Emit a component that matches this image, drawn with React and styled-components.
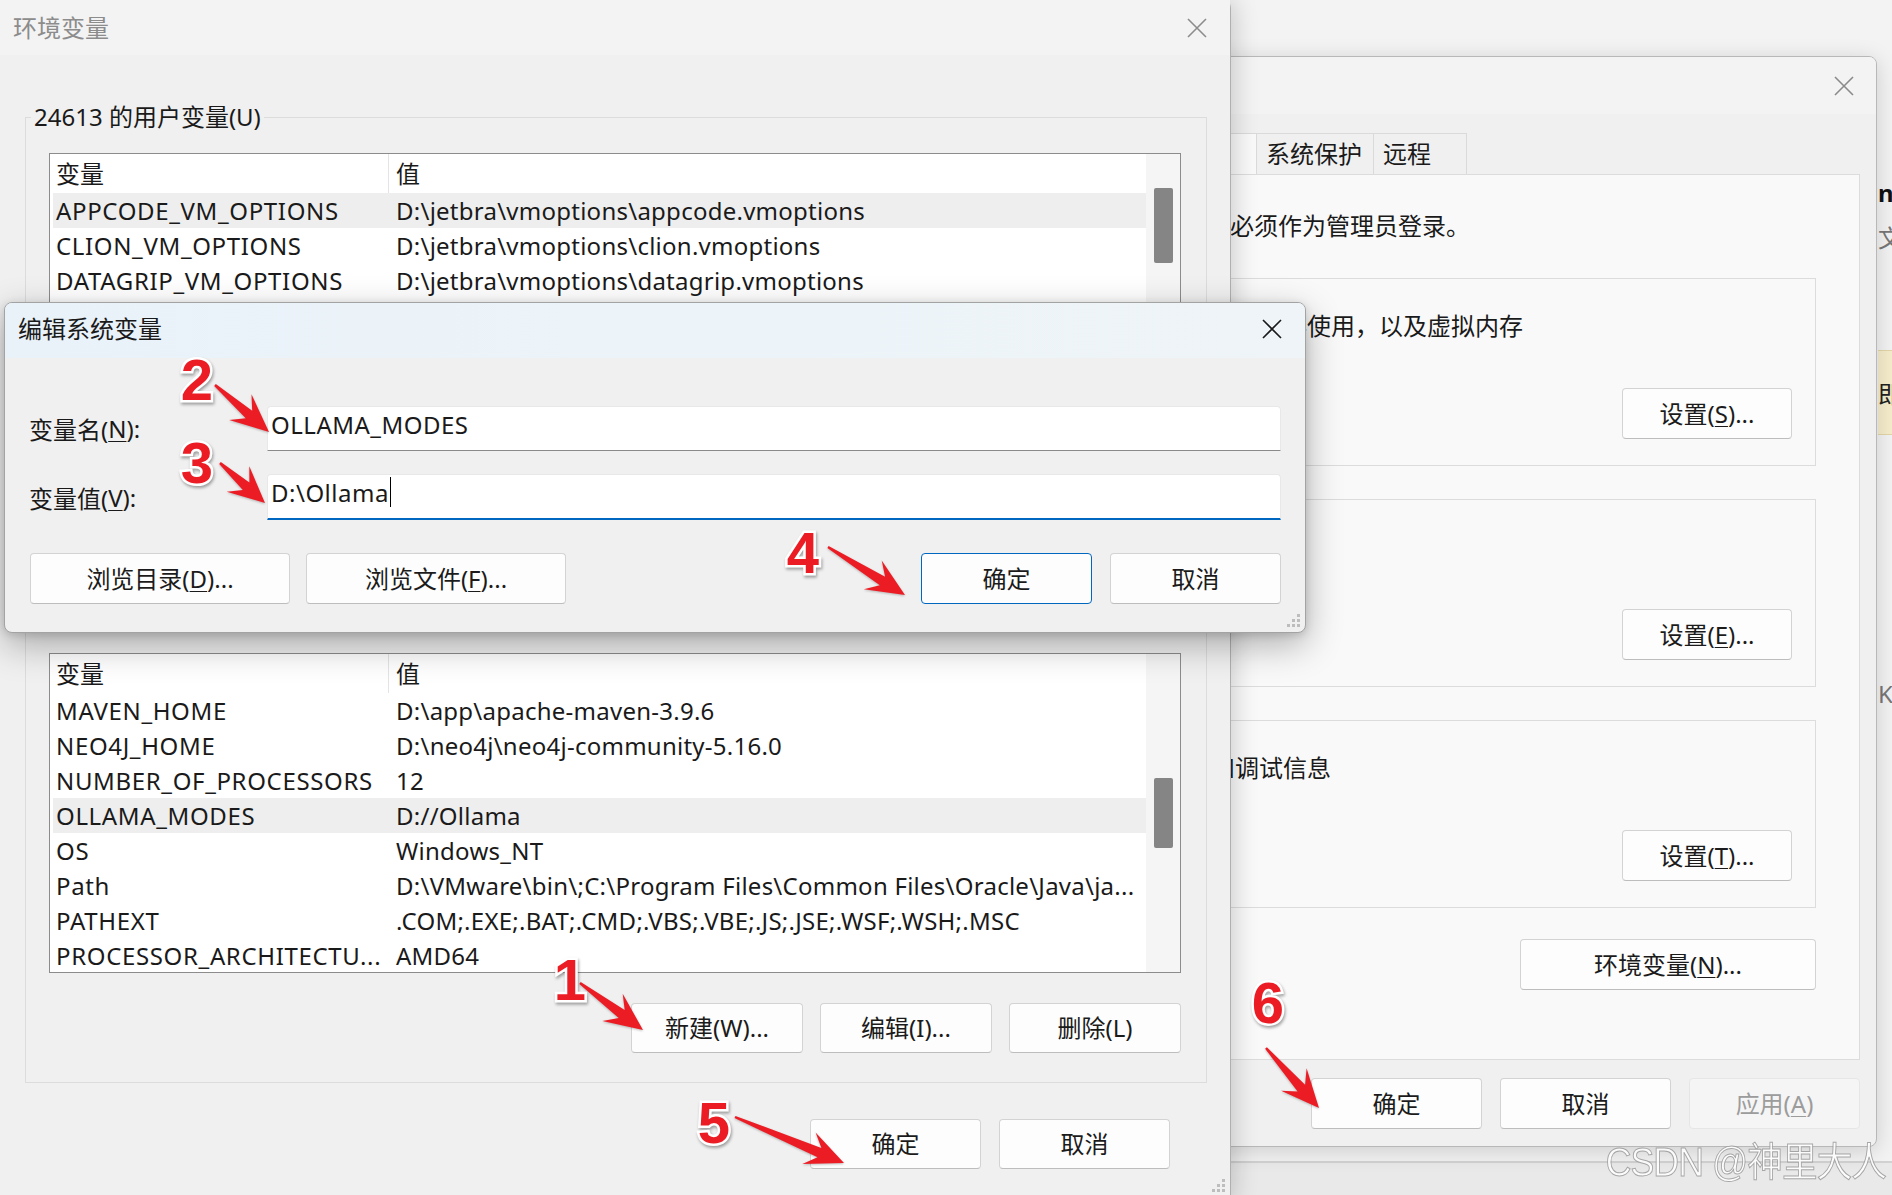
import React from 'react';
import styled, { createGlobalStyle } from 'styled-components';

const FONT = `"Noto Sans", "Noto Sans CJK SC", sans-serif`;

const Global = createGlobalStyle`
  html, body { margin: 0; padding: 0; overflow: hidden; background: #e9e9e9; }
  * { box-sizing: border-box; }
  #root { width: 1892px; height: 1195px; }
  u { text-decoration: underline; text-underline-offset: 3px; text-decoration-thickness: 1px; }
`;

const Desktop = styled.div`
  position: relative;
  width: 1892px;
  height: 1195px;
  overflow: hidden;
  background: #e9e9e9;
  font-family: ${FONT};
  font-size: 24px;
  color: #1a1a1a;
`;

/* ---------- window far behind ---------- */
const BehindWindow = styled.div`
  position: absolute;
  left: 1100px;
  top: 0;
  width: 792px;
  height: 1163px;
  background: #f3f3f3;
  border-bottom: 2px solid #d2d2d2;
  padding: 178px 0 0 778px;
  overflow: hidden;
  display: flex;
  flex-direction: column;
`;
const BehindTitle = styled.div`
  font-weight: 700;
  line-height: 30px;
  white-space: nowrap;
  color: #111;
`;
const BehindSub = styled.div`
  margin-top: 15px;
  line-height: 30px;
  color: #777;
  white-space: nowrap;
`;
const YellowBand = styled.div`
  margin-top: 97px;
  height: 85px;
  width: 40px;
  background: #f6edcc;
  border-top: 1px solid #e3d7a8;
  border-bottom: 1px solid #e3d7a8;
  display: flex;
  align-items: center;
  white-space: nowrap;
  color: #222;
`;
const BehindNote = styled.div`
  margin-top: 244px;
  line-height: 30px;
  color: #777;
  white-space: nowrap;
`;

/* ---------- shared ---------- */
const TitleBar = styled.div`
  flex-shrink: 0;
  height: ${(p) => p.$h}px;
  display: flex;
  align-items: center;
  justify-content: space-between;
  padding: 0 ${(p) => p.$pr}px ${(p) => p.$pb || 0}px ${(p) => p.$pl}px;
  background: ${(p) => p.$bg};
  color: ${(p) => p.$color};
  line-height: 30px;
`;

const CloseSvg = styled.svg`
  width: 20px;
  height: 20px;
  flex-shrink: 0;
`;
function CloseIcon({ color }) {
  return (
    <CloseSvg viewBox="0 0 20 20">
      <path d="M1 1 L19 19 M19 1 L1 19" stroke={color} strokeWidth="1.6" fill="none" />
    </CloseSvg>
  );
}

const Button = styled.button`
  width: ${(p) => p.$w}px;
  height: ${(p) => p.$h || 51}px;
  font-family: ${FONT};
  font-size: 24px;
  line-height: 30px;
  padding: 0;
  border-radius: 4px;
  background: ${(p) => (p.$disabled ? '#f5f5f5' : '#fdfdfd')};
  color: ${(p) => (p.$disabled ? '#9c9c9c' : '#1b1b1b')};
  border: 1px solid ${(p) => (p.$primary ? '#0067c0' : p.$disabled ? '#e6e6e6' : '#d3d3d3')};
  border-bottom-color: ${(p) => (p.$primary ? '#0067c0' : p.$disabled ? '#e6e6e6' : '#bdbdbd')};
  flex-shrink: 0;
`;

const Grip = styled.svg`
  position: absolute;
  right: ${(p) => p.$r}px;
  bottom: ${(p) => p.$b}px;
  width: 14px;
  height: 14px;
`;
function ResizeGrip({ r, b }) {
  const dots = [[10, 0], [10, 5], [5, 5], [10, 10], [5, 10], [0, 10]];
  return (
    <Grip $r={r} $b={b} viewBox="0 0 14 14">
      {dots.map(([x, y]) => (
        <rect key={`${x}-${y}`} x={x} y={y} width="3" height="3" fill="#bdbdbd" />
      ))}
    </Grip>
  );
}

/* ---------- System properties window ---------- */
const SysWindow = styled.div`
  position: absolute;
  left: 940px;
  top: 56px;
  width: 937px;
  height: 1091px;
  background: #f0f0f0;
  border: 1px solid #b8b8b8;
  border-radius: 8px;
  overflow: hidden;
  box-shadow: 0 4px 22px rgba(0, 0, 0, 0.16);
  display: flex;
  flex-direction: column;
`;
const SysBody = styled.div`
  padding: 19px 16px 0 16px;
  display: flex;
  flex-direction: column;
`;
const Tabs = styled.div`
  display: flex;
  height: 41px;
`;
const Tab = styled.div`
  width: ${(p) => p.$w}px;
  height: 41px;
  padding-left: 9px;
  line-height: 40px;
  border: 1px solid #dadada;
  border-bottom: none;
  border-left-width: ${(p) => (p.$first ? 1 : 0)}px;
  background: ${(p) => (p.$active ? '#f9f9f9' : '#f0f0f0')};
  white-space: nowrap;
`;
const Panel = styled.div`
  height: 886px;
  background: #f9f9f9;
  border: 1px solid #dcdcdc;
  padding: 36px 43px 0 18px;
  display: flex;
  flex-direction: column;
`;
const PanelText = styled.div`
  line-height: 30px;
  padding-left: 14px;
  white-space: nowrap;
`;
const SysGroup = styled.div`
  margin-top: ${(p) => p.$mt}px;
  height: 188px;
  border: 1px solid #dcdcdc;
  padding: 32px 23px 0 18px;
  display: flex;
  flex-direction: column;
`;
const GroupText = styled.div`
  line-height: 30px;
  white-space: nowrap;
`;
const GroupButton = styled(Button)`
  margin-top: auto;
  margin-bottom: 26px;
  align-self: flex-end;
`;
const EnvButton = styled(Button)`
  margin-top: 31px;
  align-self: flex-end;
`;
const Footer = styled.div`
  display: flex;
  justify-content: flex-end;
  gap: ${(p) => p.$gap}px;
  margin-top: ${(p) => p.$mt}px;
  padding-right: ${(p) => p.$pr || 0}px;
`;

/* ---------- Environment variables window ---------- */
const EnvWindow = styled.div`
  position: absolute;
  left: 0;
  top: 0;
  width: 1231px;
  height: 1203px;
  background: #f0f0f0;
  border-right: 1px solid #b0b0b0;
  border-radius: 0 8px 8px 0;
  box-shadow: 2px 0 26px rgba(0, 0, 0, 0.2);
  display: flex;
  flex-direction: column;
`;
const EnvBody = styled.div`
  padding: 62px 23px 0 25px;
  display: flex;
  flex-direction: column;
`;
const Group = styled.div`
  position: relative;
  margin-top: ${(p) => p.$mt || 0}px;
  border: 1px solid #dcdcdc;
  padding: 35px 25px 29px 23px;
`;
const Legend = styled.span`
  position: absolute;
  left: 5px;
  top: -16px;
  padding: 0 3px;
  background: #f0f0f0;
  line-height: 30px;
  white-space: nowrap;
`;
const VarList = styled.div`
  height: 320px;
  background: #ffffff;
  border: 1px solid #8c8c8c;
  display: flex;
`;
const ListBody = styled.div`
  flex: 1;
  min-width: 0;
  padding-left: 3px;
`;
const GridRow = styled.div`
  display: grid;
  grid-template-columns: 335px 1fr;
  height: ${(p) => p.$h}px;
  line-height: ${(p) => p.$h}px;
  background: ${(p) => (p.$selected ? '#eeeeee' : 'transparent')};
`;
const Cell = styled.div`
  padding-left: ${(p) => p.$pl}px;
  letter-spacing: ${(p) => p.$ls || 0}px;
  white-space: nowrap;
  overflow: hidden;
  ${(p) => (p.$divider ? 'border-left: 1px solid #e4e4e4;' : '')}
`;
const Scrollbar = styled.div`
  width: 34px;
  flex-shrink: 0;
  background: #f5f5f5;
  padding-left: 8px;
`;
const Thumb = styled.div`
  width: 19px;
  height: ${(p) => p.$h}px;
  margin-top: ${(p) => p.$top}px;
  background: #858585;
  border-radius: 2px;
`;
const ButtonRow = styled.div`
  display: flex;
  justify-content: flex-end;
  gap: 17px;
  margin-top: 30px;
`;

function VariableList({ rows, selected, thumbTop, thumbH }) {
  return (
    <VarList>
      <ListBody>
        <GridRow $h={39}>
          <Cell $pl={3}>变量</Cell>
          <Cell $pl={7} $divider>值</Cell>
        </GridRow>
        {rows.map(([n, v], i) => (
          <GridRow key={n} $h={35} $selected={i === selected}>
            <Cell $pl={3} $ls={0.65}>{n}</Cell>
            <Cell $pl={8} $ls={0.25}>{v}</Cell>
          </GridRow>
        ))}
      </ListBody>
      <Scrollbar>
        <Thumb $top={thumbTop} $h={thumbH} />
      </Scrollbar>
    </VarList>
  );
}

/* ---------- Edit dialog ---------- */
const EditDialog = styled.div`
  position: absolute;
  left: 4px;
  top: 302px;
  width: 1302px;
  height: 331px;
  background: #f0f0f0;
  border: 1px solid #a3a3a3;
  border-radius: 8px;
  overflow: hidden;
  box-shadow: 0 12px 36px rgba(0, 0, 0, 0.3), 0 2px 8px rgba(0, 0, 0, 0.14);
  display: flex;
  flex-direction: column;
`;
const DialogBody = styled.div`
  padding: 48px 24px 0 25px;
  display: flex;
  flex-direction: column;
`;
const FieldGrid = styled.div`
  display: grid;
  grid-template-columns: 237px 1fr;
  grid-template-rows: 45px 46px;
  row-gap: 23px;
`;
const Label = styled.div`
  display: flex;
  align-items: center;
  margin-left: -1px;
  white-space: nowrap;
`;
const TextBox = styled.div`
  background: #ffffff;
  border: 1px solid #e8e8e8;
  border-bottom: ${(p) => (p.$focused ? '2px solid #0067c0' : '1px solid #8a8a8a')};
  border-radius: 4px 4px 0 0;
  padding: 0 0 9px 3px;
  letter-spacing: 0.5px;
  display: flex;
  align-items: center;
  white-space: nowrap;
`;
const Caret = styled.span`
  display: inline-block;
  width: 1px;
  height: 30px;
  margin-left: 1px;
  background: #000;
`;
const DialogButtons = styled.div`
  margin-top: 33px;
  display: flex;
  justify-content: space-between;
`;
const BtnGroup = styled.div`
  display: flex;
  gap: ${(p) => p.$gap}px;
`;

/* ---------- annotations ---------- */
const Overlay = styled.svg`
  position: absolute;
  left: 0;
  top: 0;
  width: 1892px;
  height: 1195px;
  pointer-events: none;
`;
const Digit = styled.text`
  font-family: "Liberation Sans", Arial, sans-serif;
  font-weight: 700;
  font-size: 58px;
  fill: #ec1c24;
  stroke: #ffffff;
  stroke-width: 5px;
  paint-order: stroke;
  filter: drop-shadow(1px 2px 1.5px rgba(0, 0, 0, 0.35));
`;
const ArrowShape = styled.polygon`
  fill: #ec1c24;
  filter: drop-shadow(0.5px 1px 1px rgba(0, 0, 0, 0.25));
`;

function arrowPoints(x1, y1, x2, y2) {
  const dx = x2 - x1;
  const dy = y2 - y1;
  const L = Math.hypot(dx, dy);
  const ux = dx / L;
  const uy = dy / L;
  const nx = -uy;
  const ny = ux;
  const h = Math.min(38, L * 0.6);
  const w = 17;
  const s = 5;
  const pts = [
    [0, -1.2],
    [L - h * 0.7, -s],
    [L - h, -w],
    [L, 0],
    [L - h, w],
    [L - h * 0.7, s],
    [0, 1.2],
  ];
  return pts.map(([a, b]) => `${(x1 + ux * a + nx * b).toFixed(1)},${(y1 + uy * a + ny * b).toFixed(1)}`).join(' ');
}

const annotations = [
  { n: '1', x: 570, y: 1000, a: [580, 983, 643, 1030] },
  { n: '2', x: 197, y: 400, a: [215, 385, 269, 432] },
  { n: '3', x: 197, y: 483, a: [220, 463, 265, 503] },
  { n: '4', x: 803, y: 573, a: [828, 547, 905, 595] },
  { n: '5', x: 714, y: 1143, a: [735, 1117, 844, 1163] },
  { n: '6', x: 1268, y: 1023, a: [1266, 1048, 1319, 1108] },
];

const Watermark = styled.div`
  position: absolute;
  right: 6px;
  top: 1138px;
  font-family: "Liberation Sans", "Noto Sans CJK SC", sans-serif;
  font-size: 40px;
  line-height: 48px;
  letter-spacing: -1px;
  color: rgba(255, 255, 255, 0.85);
  -webkit-text-stroke: 1px rgba(140, 140, 140, 0.75);
  white-space: nowrap;
  transform: scaleX(0.89);
  transform-origin: right center;
`;

const userRows = [
  ['APPCODE_VM_OPTIONS', 'D:\\jetbra\\vmoptions\\appcode.vmoptions'],
  ['CLION_VM_OPTIONS', 'D:\\jetbra\\vmoptions\\clion.vmoptions'],
  ['DATAGRIP_VM_OPTIONS', 'D:\\jetbra\\vmoptions\\datagrip.vmoptions'],
  ['DATASPELL_VM_OPTIONS', 'D:\\jetbra\\vmoptions\\dataspell.vmoptions'],
  ['DEVECOSTUDIO_VM_OPTIONS', 'D:\\jetbra\\vmoptions\\devecostudio.vmoptions'],
  ['GATEWAY_VM_OPTIONS', 'D:\\jetbra\\vmoptions\\gateway.vmoptions'],
  ['GOLAND_VM_OPTIONS', 'D:\\jetbra\\vmoptions\\goland.vmoptions'],
  ['IDEA_VM_OPTIONS', 'D:\\jetbra\\vmoptions\\idea.vmoptions'],
];

const systemRows = [
  ['MAVEN_HOME', 'D:\\app\\apache-maven-3.9.6'],
  ['NEO4J_HOME', 'D:\\neo4j\\neo4j-community-5.16.0'],
  ['NUMBER_OF_PROCESSORS', '12'],
  ['OLLAMA_MODES', 'D://Ollama'],
  ['OS', 'Windows_NT'],
  ['Path', 'D:\\VMware\\bin\\;C:\\Program Files\\Common Files\\Oracle\\Java\\ja...'],
  ['PATHEXT', '.COM;.EXE;.BAT;.CMD;.VBS;.VBE;.JS;.JSE;.WSF;.WSH;.MSC'],
  ['PROCESSOR_ARCHITECTU...', 'AMD64'],
];

export default function App() {
  return (
    <Desktop>
      <Global />

      <BehindWindow>
        <BehindTitle>new</BehindTitle>
        <BehindSub>文档</BehindSub>
        <YellowBand>即</YellowBand>
        <BehindNote>K可</BehindNote>
      </BehindWindow>

      <SysWindow>
        <TitleBar $h={57} $pl={16} $pr={22} $bg="#f3f3f3" $color="#8a8a8a">
          <span>系统属性</span>
          <CloseIcon color="#8a8a8a" />
        </TitleBar>
        <SysBody>
          <Tabs>
            <Tab $w={116} $first>计算机名</Tab>
            <Tab $w={68}>硬件</Tab>
            <Tab $w={116} $active>高级</Tab>
            <Tab $w={117}>系统保护</Tab>
            <Tab $w={93}>远程</Tab>
          </Tabs>
          <Panel>
            <PanelText>要进行大多数更改，你必须作为管理员登录。</PanelText>
            <SysGroup $mt={37}>
              <GroupText>视觉效果，处理器计划，内存使用，以及虚拟内存</GroupText>
              <GroupButton $w={170}>设置(<u>S</u>)...</GroupButton>
            </SysGroup>
            <SysGroup $mt={33}>
              <GroupText>与登录帐户相关的桌面设置</GroupText>
              <GroupButton $w={170}>设置(<u>E</u>)...</GroupButton>
            </SysGroup>
            <SysGroup $mt={33}>
              <GroupText>系统启动、系统故障和调试信息</GroupText>
              <GroupButton $w={170}>设置(<u>T</u>)...</GroupButton>
            </SysGroup>
            <EnvButton $w={296}>环境变量(<u>N</u>)...</EnvButton>
          </Panel>
          <Footer $gap={18} $mt={18} $pr={0}>
            <Button $w={171}>确定</Button>
            <Button $w={171}>取消</Button>
            <Button $w={171} $disabled>应用(<u>A</u>)</Button>
          </Footer>
        </SysBody>
      </SysWindow>

      <EnvWindow>
        <TitleBar $h={55} $pl={13} $pr={23} $bg="#f3f3f3" $color="#8c8c8c">
          <span>环境变量</span>
          <CloseIcon color="#8c8c8c" />
        </TitleBar>
        <EnvBody>
          <Group>
            <Legend>24613 的用户变量(U)</Legend>
            <VariableList rows={userRows} selected={0} thumbTop={34} thumbH={75} />
            <ButtonRow>
              <Button $w={172} $h={50}>新建(N)...</Button>
              <Button $w={172} $h={50}>编辑(E)...</Button>
              <Button $w={172} $h={50}>删除(D)</Button>
            </ButtonRow>
          </Group>
          <Group $mt={34}>
            <Legend>系统变量(S)</Legend>
            <VariableList rows={systemRows} selected={3} thumbTop={124} thumbH={70} />
            <ButtonRow>
              <Button $w={172} $h={50}>新建(W)...</Button>
              <Button $w={172} $h={50}>编辑(I)...</Button>
              <Button $w={172} $h={50}>删除(L)</Button>
            </ButtonRow>
          </Group>
          <Footer $gap={18} $mt={36} $pr={37}>
            <Button $w={171} $h={50}>确定</Button>
            <Button $w={171} $h={50}>取消</Button>
          </Footer>
        </EnvBody>
        <ResizeGrip r={4} b={10} />
      </EnvWindow>

      <EditDialog>
        <TitleBar $h={55} $pl={13} $pr={23} $pb={3} $bg="linear-gradient(90deg, #e9f2f9 0%, #edf4f9 60%, #eef4f7 100%)" $color="#1a1a1a">
          <span>编辑系统变量</span>
          <CloseIcon color="#1a1a1a" />
        </TitleBar>
        <DialogBody>
          <FieldGrid>
            <Label>变量名(<u>N</u>):</Label>
            <TextBox>OLLAMA_MODES</TextBox>
            <Label>变量值(<u>V</u>):</Label>
            <TextBox $focused>
              D:\Ollama
              <Caret />
            </TextBox>
          </FieldGrid>
          <DialogButtons>
            <BtnGroup $gap={16}>
              <Button $w={260}>浏览目录(<u>D</u>)...</Button>
              <Button $w={260}>浏览文件(<u>F</u>)...</Button>
            </BtnGroup>
            <BtnGroup $gap={18}>
              <Button $w={171} $primary>确定</Button>
              <Button $w={171}>取消</Button>
            </BtnGroup>
          </DialogButtons>
        </DialogBody>
        <ResizeGrip r={4} b={4} />
      </EditDialog>

      <Overlay viewBox="0 0 1892 1195">
        {annotations.map((an) => (
          <g key={an.n}>
            <ArrowShape points={arrowPoints(...an.a)} />
            <Digit x={an.x} y={an.y} textAnchor="middle">{an.n}</Digit>
          </g>
        ))}
      </Overlay>

      <Watermark>CSDN @神里大人</Watermark>
    </Desktop>
  );
}
